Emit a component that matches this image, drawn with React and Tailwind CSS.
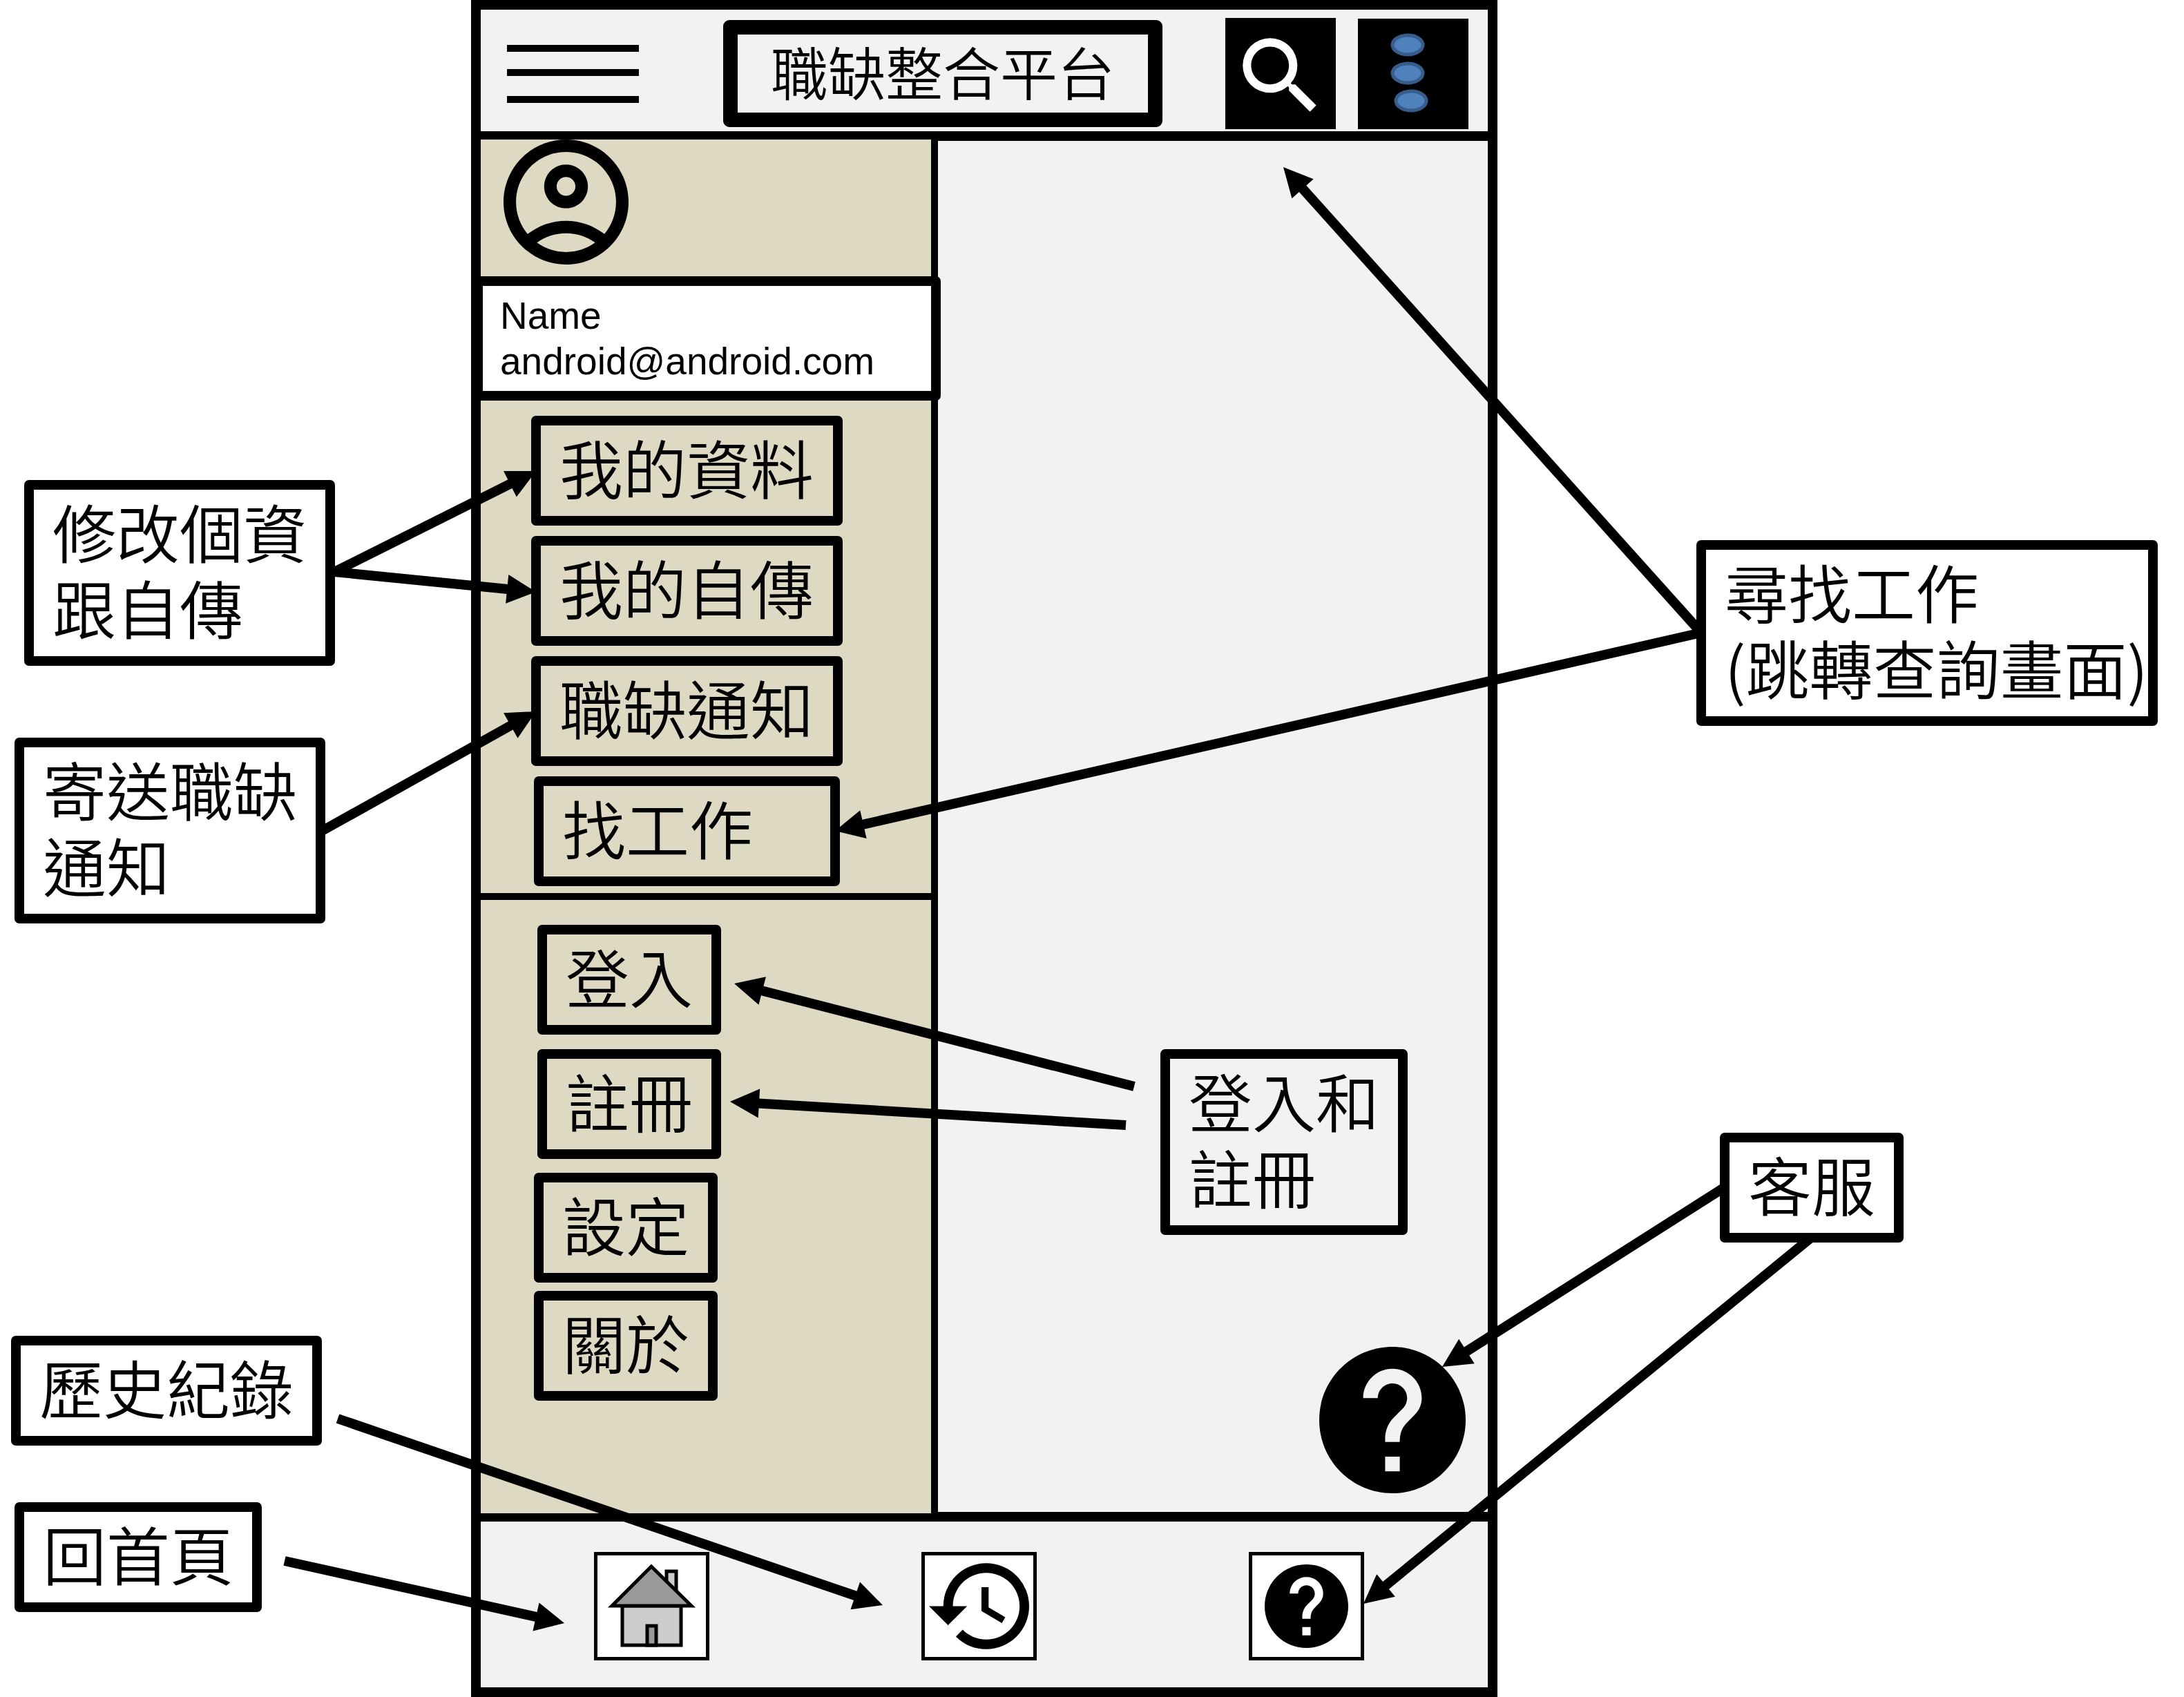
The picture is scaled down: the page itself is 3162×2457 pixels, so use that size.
import React from "react";

const NOTE =
  "w-fit rounded-[7px] border-14 border-black pt-1 pb-[17px] pl-[27px] text-[92px] leading-[110px] whitespace-nowrap";
const MENU_ITEM =
  "rounded-[7px] border-14 border-black px-[27px] pt-1 pb-[17px] text-left text-[92px] leading-[110px] whitespace-nowrap";

/* Arrows on the 3162 x 2457 board: tail x, tail y, tip x, tip y */
const ARROWS = [
  [484, 828, 776, 682],
  [484, 828, 776, 857],
  [468, 1202, 776, 1030],
  [2463, 916, 1858, 242],
  [2463, 916, 1209, 1203],
  [1642, 1573, 1063, 1424],
  [1630, 1629, 1057, 1595],
  [2497, 1719, 2088, 1979],
  [2622, 1792, 1974, 2322],
  [489, 2054, 1278, 2324],
  [412, 2260, 817, 2350],
];

function Arrow({ points: [x1, y1, x2, y2] }) {
  const length = Math.hypot(x2 - x1, y2 - y1);
  const ux = (x2 - x1) / length;
  const uy = (y2 - y1) / length;
  const bx = x2 - ux * 42;
  const by = y2 - uy * 42;
  return (
    <g>
      <line x1={x1} y1={y1} x2={bx + ux} y2={by + uy} stroke="black" strokeWidth="14" />
      <polygon
        points={`${x2},${y2} ${bx - uy * 21},${by + ux * 21} ${bx + uy * 21},${by - ux * 21}`}
      />
    </g>
  );
}

function HelpIcon({ className }) {
  return (
    <svg viewBox="2 2 20 20" className={className} aria-hidden="true">
      <path d="M12 2C6.48 2 2 6.48 2 12s4.48 10 10 10 10-4.48 10-10S17.52 2 12 2zm1 17h-2v-2h2v2zm2.07-7.75l-.9.92C13.45 12.9 13 13.5 13 15h-2v-.5c0-1.1.45-2.1 1.17-2.83l1.24-1.26c.37-.36.59-.86.59-1.41 0-1.1-.9-2-2-2s-2 .9-2 2H8c0-2.21 1.79-4 4-4s4 1.79 4 4c0 .88-.36 1.68-.93 2.25z" />
    </svg>
  );
}

function Header() {
  return (
    <header className="flex items-center border-b-12 border-black pt-[12px] pr-[28px] pb-[3px] pl-[38px]">
      <button aria-label="選單" className="shrink-0">
        <svg viewBox="0 0 191 84" className="block h-[84px] w-[191px]" aria-hidden="true">
          <path d="M0 0h191v10H0zM0 35h191v10H0zM0 74h191v10H0z" />
        </svg>
      </button>
      <h1 className="mr-[91px] ml-[122px] flex-1 rounded-[9px] border-21 border-black pb-[9px] text-center text-[83px] leading-[104px] whitespace-nowrap">
        職缺整合平台
      </h1>
      <button aria-label="搜尋" className="flex h-[161px] w-[160px] shrink-0 items-end justify-center bg-black pb-1">
        <svg viewBox="0 0 24 24" className="block h-[146px] w-[146px] fill-white" aria-hidden="true">
          <path d="M15.5 14h-.79l-.28-.27A6.471 6.471 0 0 0 16 9.5 6.5 6.5 0 1 0 9.5 16c1.61 0 3.09-.59 4.23-1.57l.27.28v.79l5 4.99L20.49 19l-4.99-5zm-6 0C7.01 14 5 11.99 5 9.5S7.01 5 9.5 5 14 7.01 14 9.5 11.99 14 9.5 14z" />
        </svg>
      </button>
      <button aria-label="更多" className="ml-8 h-[160px] w-[160px] shrink-0 bg-black">
        <svg viewBox="0 0 160 160" className="block h-full w-full" fill="#4f81bd" stroke="#385d8a" strokeWidth="5" aria-hidden="true">
          <ellipse cx="72" cy="38" rx="22" ry="14" />
          <ellipse cx="72" cy="79" rx="22" ry="14" />
          <ellipse cx="77" cy="119" rx="22" ry="14" />
        </svg>
      </button>
    </header>
  );
}

function Sidebar() {
  return (
    <aside className="border-r-10 border-black bg-[#ddd9c3]">
      <div className="h-[198px] pl-8">
        <svg viewBox="2 2 20 20" className="block h-[181px] w-[183px]" aria-label="帳號">
          <path d="M12 2C6.48 2 2 6.48 2 12s4.48 10 10 10 10-4.48 10-10S17.52 2 12 2zM7.35 18.5C8.66 17.56 10.26 17 12 17s3.34.56 4.65 1.5C15.34 19.44 13.74 20 12 20s-3.34-.56-4.65-1.5zm10.79-1.38C16.45 15.8 14.32 15 12 15s-4.45.8-6.14 2.12C4.7 15.73 4 13.95 4 12c0-4.42 3.58-8 8-8s8 3.58 8 8c0 1.95-.7 3.73-1.86 5.12z" />
          <path d="M12 6c-1.93 0-3.5 1.57-3.5 3.5S10.07 13 12 13s3.5-1.57 3.5-3.5S13.93 6 12 6zm0 5c-.83 0-1.5-.67-1.5-1.5S11.17 8 12 8s1.5.67 1.5 1.5S12.83 11 12 11z" />
        </svg>
      </div>
      <div className="relative z-10 -mr-[14px] rounded-r-[7px] border-y-14 border-r-14 border-l-3 border-black bg-white py-[10px] pl-[25px] font-['Liberation_Sans',Arial,sans-serif] text-[55px] leading-[66px] font-normal">
        <p>Name</p>
        <p>android@android.com</p>
      </div>
      <nav>
        <div className="mt-[22px] ml-[73px] flex w-[451px] flex-col gap-[15px]">
          <button className={MENU_ITEM}>我的資料</button>
          <button className={MENU_ITEM}>我的自傳</button>
          <button className={MENU_ITEM}>職缺通知</button>
          <button className={`${MENU_ITEM} mx-1`}>找工作</button>
        </div>
        <hr className="mt-[10px] border-t-10 border-black" />
        <div className="mt-[36px] ml-[82px] flex flex-col items-start gap-[21px]">
          <button className={MENU_ITEM}>登入</button>
          <button className={MENU_ITEM}>註冊</button>
        </div>
        <div className="mt-[20px] ml-[77px] flex flex-col items-start gap-[12px]">
          <button className={MENU_ITEM}>設定</button>
          <button className={MENU_ITEM}>關於</button>
        </div>
      </nav>
    </aside>
  );
}

function Footer() {
  const tile =
    "flex h-[157px] w-[167px] items-center justify-center border-5 border-black bg-white";
  return (
    <footer className="flex h-[252px] items-center justify-between border-t-12 border-black pt-1 pr-[179px] pl-[164px]">
      <button aria-label="回首頁" className={tile}>
        <svg viewBox="5 5 157 147" className="h-[147px] w-[157px]" stroke="black" strokeWidth="5" aria-hidden="true">
          <rect x="105" y="28" width="14" height="50" fill="#cccccc" />
          <rect x="41" y="78" width="85" height="57" fill="#cccccc" />
          <path d="M83 21L26 78H141Z" fill="#999999" />
          <rect x="77" y="107" width="13" height="28" fill="#999999" />
        </svg>
      </button>
      <button aria-label="歷史紀錄" className={tile}>
        <svg viewBox="1 3 21 18" className="h-[125px] w-[145px]" aria-hidden="true">
          <path d="M13 3a9 9 0 0 0-9 9H1l3.89 3.89.07.14L9 12H6c0-3.87 3.13-7 7-7s7 3.13 7 7-3.13 7-7 7c-1.93 0-3.68-.79-4.94-2.06l-1.42 1.42A8.954 8.954 0 0 0 13 21a9 9 0 0 0 0-18zm-1 5v5l4.28 2.54.72-1.21-3.5-2.08V8H12z" />
        </svg>
      </button>
      <button aria-label="客服" className={tile}>
        <HelpIcon className="h-[121px] w-[121px]" />
      </button>
    </footer>
  );
}

export default function App() {
  return (
    <div className="relative grid min-h-screen grid-cols-[341fr_743fr_497fr] bg-white font-['Noto_Sans_CJK_TC',sans-serif] font-[350] text-black">
      <section className="pt-[695px]">
        <p className={`${NOTE} ml-[35px] pr-[27px]`}>
          修改個資
          <br />
          跟自傳
        </p>
        <p className={`${NOTE} mt-[104px] ml-[21px] pr-[27px]`}>
          寄送職缺
          <br />
          通知
        </p>
        <p className={`${NOTE} mt-[597px] ml-[16px] pr-[27px]`}>歷史紀錄</p>
        <p className={`${NOTE} mt-[82px] ml-[21px] pr-[27px]`}>回首頁</p>
      </section>

      <main className="flex flex-col border-14 border-black bg-[#f2f2f2]">
        <Header />
        <div className="grid flex-1 grid-cols-[331fr_398fr]">
          <Sidebar />
          <section className="flex flex-col items-end justify-end border-y-2 border-black">
            <p className={`${NOTE} mr-[116px] mb-[162px] pr-[27px]`}>
              登入和
              <br />
              註冊
            </p>
            <button aria-label="客服" className="mr-8 mb-[27px]">
              <HelpIcon className="block h-[212px] w-[212px]" />
            </button>
          </section>
        </div>
        <Footer />
      </main>

      <section className="pt-[782px]">
        <p className={`${NOTE} ml-[288px]`}>
          尋找工作
          <br />
          (跳轉查詢畫面)
        </p>
        <p className={`${NOTE} mt-[589px] ml-[322px] pr-[27px]`}>客服</p>
      </section>

      <svg
        viewBox="0 0 3162 2457"
        preserveAspectRatio="none"
        className="pointer-events-none absolute inset-0 z-20 h-full w-full"
        aria-hidden="true"
      >
        {ARROWS.map((points) => (
          <Arrow key={points.join()} points={points} />
        ))}
      </svg>
    </div>
  );
}
